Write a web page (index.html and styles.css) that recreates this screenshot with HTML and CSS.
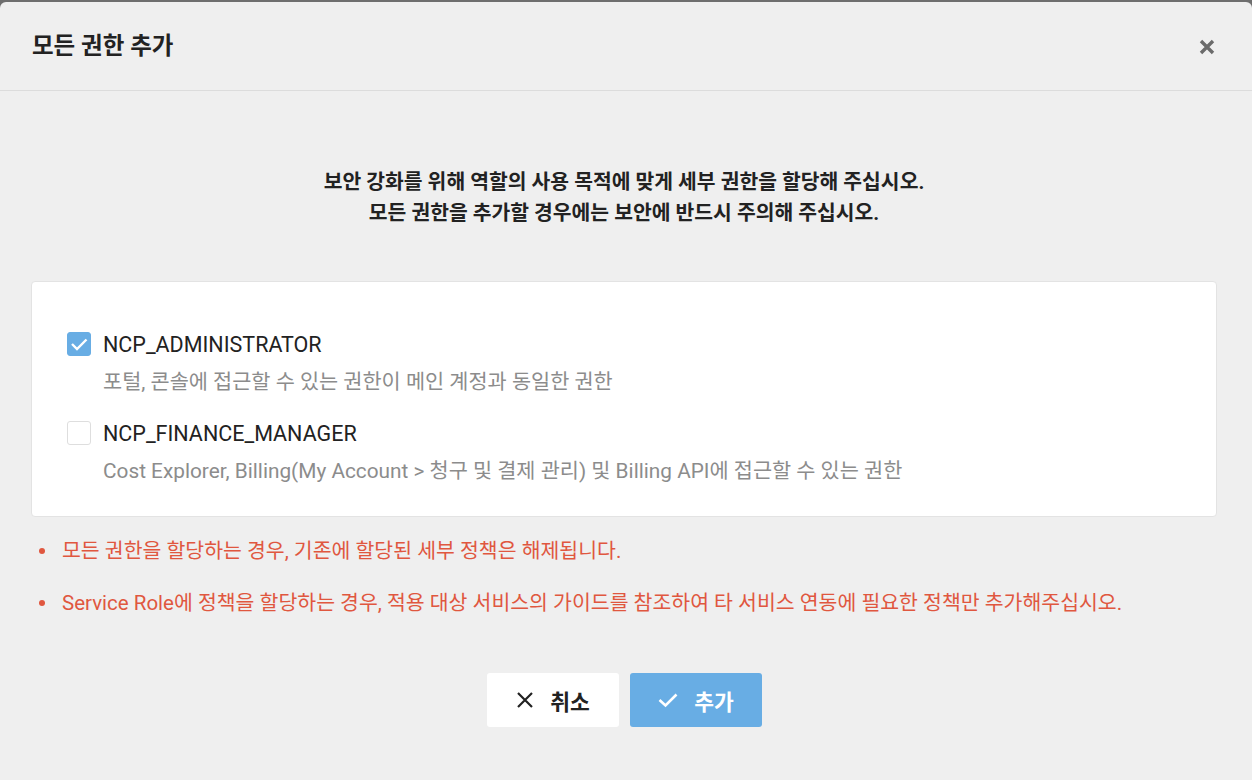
FILE: index.html
```html
<!DOCTYPE html>
<html lang="ko">
<head>
<meta charset="utf-8">
<title>모든 권한 추가</title>
<link rel="stylesheet" href="styles.css">
</head>
<body>
<div class="dialog">
  <header class="dialog-header">
    <h1 class="dialog-title">모든 권한 추가</h1>
    <button class="close-btn" aria-label="닫기">
      <svg width="18" height="18" viewBox="0 0 18 18"><path d="M3 3 L15 15 M15 3 L3 15" stroke="#6b6b6b" stroke-width="3.4" stroke-linecap="butt"/></svg>
    </button>
  </header>
  <div class="dialog-body">
    <p class="intro">보안 강화를 위해 역할의 사용 목적에 맞게 세부 권한을 할당해 주십시오.<br>모든 권한을 추가할 경우에는 보안에 반드시 주의해 주십시오.</p>
    <div class="card">
      <div class="option">
        <span class="checkbox checked">
          <svg width="24" height="24" viewBox="0 0 24 24"><path d="M5 12 L10 17 L19.5 7.5" fill="none" stroke="#fff" stroke-width="2.4"/></svg>
        </span>
        <div class="option-text">
          <div class="option-name">NCP_ADMINISTRATOR</div>
          <div class="option-desc">포털, 콘솔에 접근할 수 있는 권한이 메인 계정과 동일한 권한</div>
        </div>
      </div>
      <div class="option">
        <span class="checkbox"></span>
        <div class="option-text">
          <div class="option-name">NCP_FINANCE_MANAGER</div>
          <div class="option-desc">Cost Explorer, Billing(My Account &gt; 청구 및 결제 관리) 및 Billing API에 접근할 수 있는 권한</div>
        </div>
      </div>
    </div>
    <ul class="notes">
      <li>모든 권한을 할당하는 경우, 기존에 할당된 세부 정책은 해제됩니다.</li>
      <li>Service Role에 정책을 할당하는 경우, 적용 대상 서비스의 가이드를 참조하여 타 서비스 연동에 필요한 정책만 추가해주십시오.</li>
    </ul>
    <div class="actions">
      <button class="btn btn-cancel">
        <svg width="20" height="20" viewBox="0 0 20 20"><path d="M3 3 L17 17 M17 3 L3 17" stroke="#222" stroke-width="2.2"/></svg>
        <span>취소</span>
      </button>
      <button class="btn btn-add">
        <svg width="22" height="20" viewBox="0 0 22 20"><path d="M2.5 10 L8.5 15.5 L19.5 4.5" fill="none" stroke="#fff" stroke-width="2.6"/></svg>
        <span>추가</span>
      </button>
    </div>
  </div>
</div>
</body>
</html>
```

FILE: styles.css
```css
* { box-sizing: border-box; }
html, body { margin: 0; padding: 0; }
body {
  background: #6e6e6e;
  font-family: Roboto, "Noto Sans CJK KR", sans-serif;
  height: 780px;
  overflow: hidden;
  padding-top: 2px;
}
.dialog {
  background: #efefef;
  height: 778px;
  border-radius: 6px 6px 0 0;
}
.dialog-header {
  height: 89px;
  border-bottom: 1px solid #dcdcdc;
  display: flex;
  align-items: center;
  justify-content: space-between;
  padding: 0 36px 0 32px;
}
.dialog-title {
  margin: 0;
  font-size: 23.5px;
  font-weight: 700;
  color: #222;
  padding-bottom: 4px;
}
.close-btn {
  border: 0;
  background: none;
  padding: 0;
  display: flex;
  margin-top: 2px;
}
.dialog-body {
  padding: 0 35px 0 31px;
}
.intro {
  margin: 76px 0 0;
  text-align: center;
  font-size: 20.4px;
  font-weight: 700;
  line-height: 31px;
  color: #222;
}
.card {
  margin-top: 52px;
  background: #fff;
  border: 1px solid #e3e3e3;
  border-radius: 4px;
  padding: 42px 35px 28px;
  display: flex;
  flex-direction: column;
  gap: 14px;
}
.option {
  display: flex;
  gap: 12px;
}
.checkbox {
  width: 24px;
  height: 24px;
  flex: none;
  border: 1px solid #dedede;
  border-radius: 3px;
  background: #fff;
  margin-top: 8px;
  display: flex;
}
.checkbox.checked {
  background: #68ade4;
  border-color: #68ade4;
}
.checkbox.checked svg { margin: -1px; }
.option-name {
  font-size: 21.5px;
  color: #222;
  line-height: 42px;
}
.option-desc {
  font-size: 20.8px;
  color: #8c8c8c;
  line-height: 33px;
}
.notes {
  list-style: none;
  margin: 18px 0 0;
  padding: 0;
  color: #e0573f;
  font-size: 20.5px;
  line-height: 32px;
  display: flex;
  flex-direction: column;
  gap: 20px;
}
.notes li {
  position: relative;
  padding-left: 31px;
}
.notes li::before {
  content: "";
  position: absolute;
  left: 8px;
  top: 13px;
  width: 6px;
  height: 6px;
  border-radius: 50%;
  background: #e0573f;
}
.actions {
  margin-top: 54px;
  display: flex;
  justify-content: center;
  gap: 11px;
}
.btn {
  width: 132px;
  height: 54px;
  border: 0;
  border-radius: 3px;
  display: flex;
  align-items: center;
  justify-content: center;
  gap: 15px;
  font-family: Roboto, "Noto Sans CJK KR", sans-serif;
  font-size: 21.5px;
  font-weight: 700;
}
.btn-cancel { background: #fff; color: #222; }
.btn-add { background: #68ade4; color: #fff; }
```
